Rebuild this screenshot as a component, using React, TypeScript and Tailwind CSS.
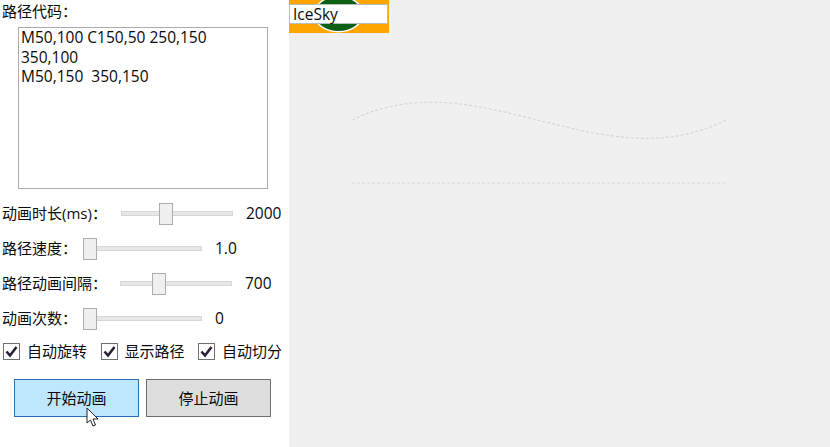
const font = '[font-family:"Open_Sans","Noto_Sans_CJK_SC",sans-serif]';

type SliderProps = {
  label: string;
  amount: string;
  labelClass: string;
  trackClass: string;
  thumbClass: string;
};

function Slider({ label, amount, labelClass, trackClass, thumbClass }: SliderProps) {
  return (
    <div className="flex items-center h-[35px]">
      <div className={`whitespace-nowrap shrink-0 ${labelClass}`}>{label}</div>
      <div className={`relative shrink-0 h-[5px] border border-[#d6d6d6] bg-[#e7e7e7] ${trackClass}`}>
        <div className={`absolute top-[-9px] w-[14px] h-[22px] border border-[#acacac] bg-[#f0f0f0] ${thumbClass}`} />
      </div>
      <div className="ml-[13px] shrink-0 text-[15.5px]">{amount}</div>
    </div>
  );
}

function Check({ label }: { label: string }) {
  return (
    <label className="flex items-center h-[17px] gap-[7px] leading-[17px]">
      <span className="w-[17px] h-[17px] border border-[#707070] bg-white flex items-center justify-center">
        <svg width="13" height="13" viewBox="0 0 13 13" fill="none" stroke="#2b2035" strokeWidth="2.6">
          <path d="M1.5 6.5 L5 10.5 L11.5 2" />
        </svg>
      </span>
      <span>{label}</span>
    </label>
  );
}

export default function App() {
  return (
    <div className={`flex w-[830px] h-[447px] overflow-hidden bg-white text-[15px] text-[#0a0a0a] ${font}`}>
      <div className="w-[289px] shrink-0 pl-[2px] flex flex-col">
        <div className="h-[27px] leading-[22px]">路径代码：</div>
        <div className="ml-[16px] w-[250px] h-[162px] border border-[#ababab] pl-[2px] text-[15.5px] leading-[19.5px]">
          M50,100 C150,50 250,150<br />350,100<br />M50,150&nbsp; 350,150
        </div>
        <div className="mt-[7px]">
          <Slider label="动画时长(ms)：" amount="2000" labelClass="w-[119px]" trackClass="w-[112px]" thumbClass="left-[37px]" />
          <Slider label="路径速度：" amount="1.0" labelClass="w-[81px]" trackClass="w-[119px]" thumbClass="left-[-1px]" />
          <Slider label="路径动画间隔：" amount="700" labelClass="w-[118px]" trackClass="w-[112px]" thumbClass="left-[31px]" />
          <Slider label="动画次数：" amount="0" labelClass="w-[81px]" trackClass="w-[119px]" thumbClass="left-[-1px]" />
        </div>
        <div className="flex gap-[13.5px] ml-[1px] mt-[7px]">
          <Check label="自动旋转" />
          <Check label="显示路径" />
          <Check label="自动切分" />
        </div>
        <div className="relative flex gap-[7px] ml-[12px] mt-[19px]">
          <button className="w-[125px] h-[38px] border border-[#2c6fb0] bg-[#bee6fd]">开始动画</button>
          <button className="w-[125px] h-[38px] border border-[#707070] bg-[#dddddd]">停止动画</button>
          <svg className="absolute left-[72px] top-[28px]" width="14" height="21" viewBox="0 0 14 21">
            <path d="M1 1 L1 16 L4.5 13 L7 19 L9.5 18 L7 12 L12 12 Z" fill="#fff" stroke="#222" strokeWidth="1" />
          </svg>
        </div>
      </div>
      <div className="relative flex-1 bg-[#f0f0f0]">
        <div className="absolute left-0 top-0 w-[100px] h-[33px] bg-[#ffa500] overflow-hidden">
          <svg className="absolute left-0 top-0" width="100" height="33" viewBox="0 0 100 33">
            <ellipse cx="49.5" cy="14" rx="25" ry="18.5" fill="#fff" />
            <ellipse cx="49.5" cy="14" rx="23.5" ry="17" fill="#0d5f16" />
          </svg>
          <div className="absolute left-0 top-[4px] w-[99px] h-[20px] border border-[#b4bfb8] bg-white pl-[3px] text-[15.5px] leading-[18px]">IceSky</div>
        </div>
        <svg className="absolute left-0 top-0" width="541" height="447" fill="none" stroke="#d6d6d6" strokeWidth="1.2" strokeDasharray="3 2">
          <path d="M63 120 C 188 58, 312 183, 437 120" />
          <path d="M63 183 L436 183" />
        </svg>
      </div>
    </div>
  );
}
